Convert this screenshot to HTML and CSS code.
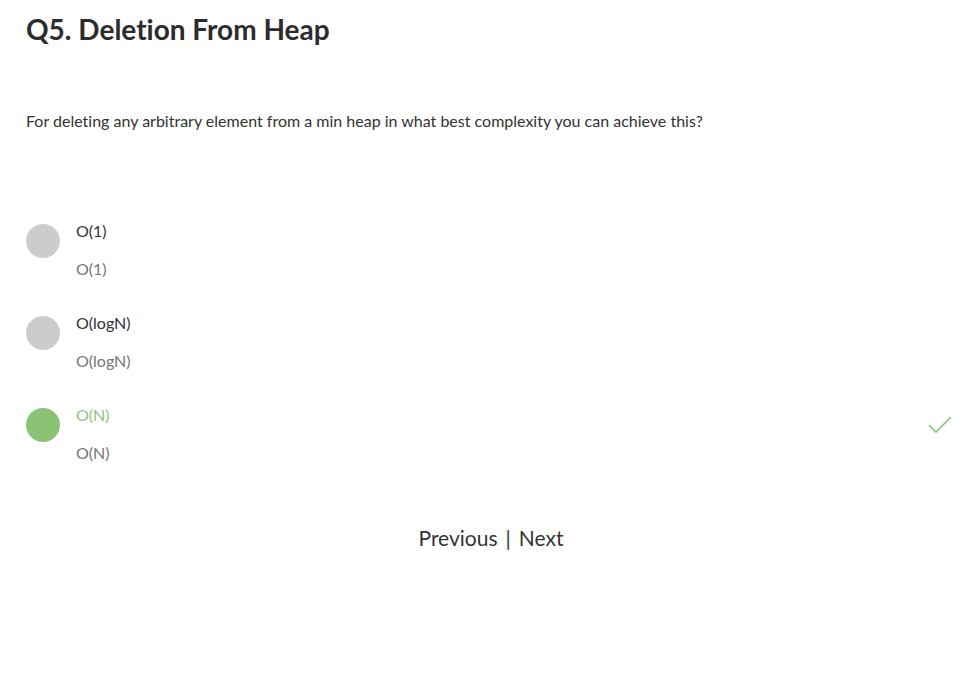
FILE: index.html
```html
<!DOCTYPE html>
<html>
<head>
<meta charset="utf-8">
<link rel="stylesheet" href="styles.css">
</head>
<body>
<div class="page">
  <h1 class="title">Q5. Deletion From Heap</h1>
  <p class="question">For deleting any arbitrary element from a min heap in what best complexity you can achieve this?</p>
  <div class="options">
    <div class="option">
      <span class="dot"></span>
      <div class="texts">
        <div class="label">O(1)</div>
        <div class="sub">O(1)</div>
      </div>
    </div>
    <div class="option">
      <span class="dot"></span>
      <div class="texts">
        <div class="label">O(logN)</div>
        <div class="sub">O(logN)</div>
      </div>
    </div>
    <div class="option correct">
      <span class="dot"></span>
      <div class="texts">
        <div class="label">O(N)</div>
        <div class="sub">O(N)</div>
      </div>
      <svg class="check" width="24" height="18" viewBox="0 0 24 18"><path d="M1 9 L8 16 L23 1" fill="none" stroke="#8bc27a" stroke-width="1.6"/></svg>
    </div>
  </div>
  <div class="nav">
    <span class="nav-link">Previous</span>
    <span class="sep">|</span>
    <span class="nav-link">Next</span>
  </div>
</div>
</body>
</html>
```
FILE: styles.css
```css
html, body { margin: 0; padding: 0; background: #fff; }
body { font-family: "Lato", "Open Sans", sans-serif; color: #333; font-variant-ligatures: none; }
.page { padding: 12px 20px 0 26px; }
.title { margin: 0; font-size: 28px; font-weight: 700; color: #2c2c2c; line-height: 34px; }
.question { margin: 65px 0 0; font-size: 16px; line-height: 20px; color: #333; }
.options { margin-top: 90px; display: flex; flex-direction: column; gap: 34px; }
.option { display: flex; align-items: flex-start; }
.dot { width: 34px; height: 34px; border-radius: 50%; background: #cccccc; margin-top: 3px; flex: none; }
.texts { margin-left: 16px; flex: 1; }
.label { font-size: 16px; line-height: 20px; color: #333; }
.sub { margin-top: 18px; font-size: 16px; line-height: 20px; color: #777; }
.correct .dot { background: #8cc274; }
.correct .label { color: #8dc47b; }
.check { margin-top: 11px; margin-right: 0; }
.nav { margin-top: 62px; display: flex; justify-content: center; gap: 8px; font-size: 21px; color: #333; padding-left: 4px; }
.sep { color: #333; }
```
